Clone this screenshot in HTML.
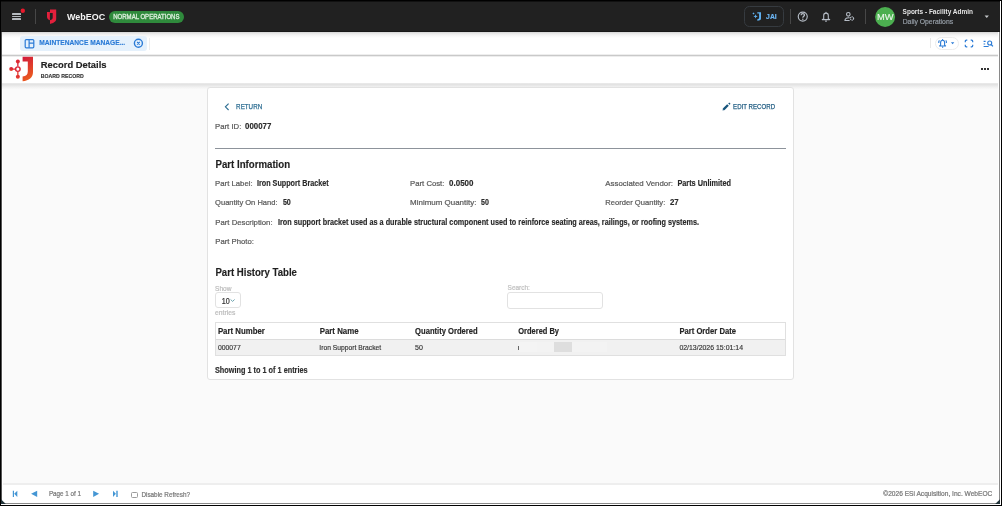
<!DOCTYPE html>
<html><head><meta charset="utf-8"><style>
html,body{margin:0;padding:0;width:1002px;height:506px;overflow:hidden;background:#000}
body{position:relative;font-family:"Liberation Sans",sans-serif}
.t{position:absolute;line-height:1;white-space:nowrap}
.r{position:absolute;display:block}
</style></head><body>
<div class="r" style="left:0px;top:0px;width:1002.00px;height:506.00px;background:#000"></div>
<div class="r" style="left:1px;top:1px;width:1000.00px;height:504.00px;background:#fff"></div>
<div class="r" style="left:1px;top:1px;width:999.00px;height:503.00px;background:#fff;border-left:1px solid #555;border-right:1px solid #8a8a8a;border-bottom:1px solid #8a8a8a;box-sizing:border-box"></div>
<div class="r" style="left:3px;top:56px;width:995.00px;height:427.00px;background:#fafafa"></div>
<div class="r" style="left:1px;top:1px;width:999.00px;height:31.00px;background:#212121;border-top:1px solid #111;border-bottom:1px solid #181818;box-sizing:border-box"></div>
<div class="r" style="left:2px;top:32px;width:996.00px;height:6.00px;background:linear-gradient(#d4d4d4,#ebebeb 30%,#f6f6f6 60%,#fff)"></div>
<div class="r" style="left:12px;top:13.1px;width:9.30px;height:1.70px;background:#b5babf;border-radius:0.6px"></div>
<div class="r" style="left:12px;top:15.6px;width:9.30px;height:1.70px;background:#b5babf;border-radius:0.6px"></div>
<div class="r" style="left:12px;top:18.1px;width:9.30px;height:1.70px;background:#b5babf;border-radius:0.6px"></div>
<svg class="r" style="left:20px;top:8px" width="6" height="6" viewBox="0 0 6 6"><circle cx="2.8" cy="2.7" r="2.2" fill="#e8192c"/></svg>
<div class="r" style="left:35.2px;top:9px;width:1.00px;height:15.00px;background:#474747"></div>
<svg class="r" style="left:42px;top:6px" width="20" height="22" viewBox="0 0 20 22"><g fill="#e3203c"><path d="M8,3.5 H14.2 V13 C14.2,15.6 11.5,17 8,18 V14.3 C9.8,13.8 10.7,12.8 10.7,11.5 V7 H8 Z"/><path d="M5,6 H7.9 V14.3 C6.3,13.8 5,12.6 5,10.8 Z"/></g></svg>
<div class="r" style="left:109px;top:11px;width:74.50px;height:11.50px;background:#2f8a3c;border-radius:6px"></div>
<div class="r" style="left:744px;top:6px;width:40.00px;height:21.00px;border:1px solid #363b40;border-radius:5.5px;box-sizing:border-box"></div>
<svg class="r" style="left:750px;top:10px" width="14" height="13" viewBox="0 0 14 13"><g fill="#5fb0f0"><path d="M7.3,2.2 H11 V8.5 C11,10 10,10.6 7.3,10.7 V9.2 C8.6,9.1 9.1,8.6 9.1,7.8 V3.6 H7.3 Z"/><path d="M5.6,4.2 L6.2,5.8 L7.8,6.4 L6.2,7 L5.6,8.6 L5,7 L3.4,6.4 L5,5.8 Z"/><path d="M3.5,2.3 L3.9,3.1 L4.7,3.5 L3.9,3.9 L3.5,4.7 L3.1,3.9 L2.3,3.5 L3.1,3.1 Z"/></g></svg>
<div class="r" style="left:790px;top:9px;width:1.00px;height:15.00px;background:#474747"></div>
<svg class="r" style="left:796px;top:10px" width="14" height="14" viewBox="0 0 14 14"><circle cx="6.75" cy="6.6" r="4.5" fill="none" stroke="#b6bdc6" stroke-width="1.15"/><path d="M5.1,5.3 C5.1,4.2 5.9,3.7 6.8,3.7 C7.8,3.7 8.5,4.3 8.5,5.1 C8.5,6.3 6.8,6.4 6.8,7.8" fill="none" stroke="#b6bdc6" stroke-width="1.3"/><circle cx="6.8" cy="9.35" r="0.75" fill="#b6bdc6"/></svg>
<svg class="r" style="left:819px;top:10px" width="14" height="14" viewBox="0 0 14 14"><path d="M4.7,8.9 V5.4 C4.7,4 5.7,3.1 7,3.1 C8.3,3.1 9.3,4 9.3,5.4 V8.9 L10.7,9.6 H3.3 Z" fill="none" stroke="#b6bdc6" stroke-width="1.1" stroke-linejoin="round"/><path d="M6.2,11.2 H7.8" stroke="#b6bdc6" stroke-width="1.2"/><circle cx="7" cy="2.3" r="0.6" fill="#b6bdc6"/></svg>
<svg class="r" style="left:842px;top:10px" width="14" height="13" viewBox="0 0 14 13"><circle cx="6.3" cy="4.3" r="1.8" fill="none" stroke="#b6bdc6" stroke-width="1.1"/><path d="M7.6,7.9 C5,7.4 2.9,8.5 2.9,10.5 H7.6" fill="none" stroke="#b6bdc6" stroke-width="1.1" stroke-linejoin="round"/><circle cx="10" cy="8.5" r="1.6" fill="none" stroke="#b6bdc6" stroke-width="1.2" stroke-dasharray="1.1 0.5"/></svg>
<div class="r" style="left:865px;top:9px;width:1.00px;height:15.00px;background:#474747"></div>
<svg class="r" style="left:874px;top:5.6px" width="22" height="22" viewBox="0 0 22 22"><circle cx="11.1" cy="11" r="10" fill="#4caf50"/></svg>
<svg class="r" style="left:983px;top:14px" width="8" height="6" viewBox="0 0 8 6"><path d="M1.6,1.5 H5.9 L3.75,3.9 Z" fill="#c4c7ca"/></svg>
<div class="r" style="left:2px;top:54px;width:996.00px;height:1.00px;background:#eeeeee"></div>
<div class="r" style="left:2px;top:55px;width:996.00px;height:1.00px;background:#c9c9c9"></div>
<div class="r" style="left:2px;top:56px;width:996.00px;height:1.00px;background:#ededed"></div>
<div class="r" style="left:20px;top:36px;width:127.00px;height:15.00px;background:#e5f1fc;border-radius:3px"></div>
<svg class="r" style="left:23px;top:38px" width="13" height="11" viewBox="0 0 13 11"><rect x="2.2" y="1.6" width="8.6" height="8.2" rx="1" fill="none" stroke="#2b7bd6" stroke-width="1.2"/><path d="M6.1,1.6 V9.8 M6.1,5.1 H10.8" stroke="#2b7bd6" stroke-width="1.2"/></svg>
<svg class="r" style="left:132px;top:37px" width="13" height="13" viewBox="0 0 13 13"><circle cx="6.4" cy="6.3" r="4.0" fill="none" stroke="#2b7bd6" stroke-width="1.4"/><path d="M5.1,5 L7.7,7.6 M7.7,5 L5.1,7.6" stroke="#2b7bd6" stroke-width="1.1"/></svg>
<div class="r" style="left:149px;top:38px;width:1.00px;height:12.00px;background:#ededed"></div>
<div class="r" style="left:930px;top:37.7px;width:1.00px;height:10.80px;background:#e8e8e8"></div>
<div class="r" style="left:934.5px;top:36.5px;width:24.50px;height:13.50px;border:1px solid #ececec;border-radius:7px;box-sizing:border-box"></div>
<svg class="r" style="left:936px;top:37px" width="13" height="12" viewBox="0 0 13 12"><g fill="none" stroke="#2b7bd6" stroke-width="1.1" stroke-linejoin="round"><path d="M4.6,8.3 V5.6 C4.6,4.1 5.5,3.2 6.6,3.2 C7.7,3.2 8.6,4.1 8.6,5.6 V8.3 L9.6,9 H3.6 Z"/><path d="M6,10.1 H7.2"/><path d="M3.4,3.3 C2.8,4 2.6,4.8 2.8,6"/><path d="M9.8,3.3 C10.4,4 10.6,4.8 10.4,6"/></g><circle cx="6.6" cy="2.6" r="0.6" fill="#2b7bd6"/></svg>
<svg class="r" style="left:950px;top:41px" width="6" height="4" viewBox="0 0 6 4"><path d="M0.9,1.2 H4.3 L2.6,3.2 Z" fill="#2b7bd6"/></svg>
<svg class="r" style="left:964px;top:39px" width="10" height="9" viewBox="0 0 10 9"><path d="M1.3,3.3 V2.2 Q1.3,1.2 2.3,1.2 H3.3 M6.7,1.2 H7.7 Q8.7,1.2 8.7,2.2 V3.3 M8.7,5.7 V6.8 Q8.7,7.8 7.7,7.8 H6.7 M3.3,7.8 H2.3 Q1.3,7.8 1.3,6.8 V5.7" fill="none" stroke="#2b7bd6" stroke-width="1.2"/></svg>
<svg class="r" style="left:982px;top:39px" width="13" height="10" viewBox="0 0 13 10"><path d="M1.6,2.4 H3.6 M1.6,5 H3.2 M1.6,7.5 H6.6" stroke="#2b7bd6" stroke-width="1.1"/><circle cx="7.7" cy="4" r="2" fill="none" stroke="#2b7bd6" stroke-width="1.1"/><path d="M9.2,5.5 L10.9,7.4" stroke="#2b7bd6" stroke-width="1.3"/></svg>
<div class="r" style="left:2px;top:57px;width:996.00px;height:26.00px;background:#fff"></div>
<div class="r" style="left:2px;top:83px;width:996.00px;height:6.00px;background:linear-gradient(#ebebeb 0%,#e3e3e3 25%,#e9e9e9 45%,#f0f0f0 65%,#f5f5f5 85%,#f9f9f9 100%)"></div>
<svg class="r" style="left:8px;top:55px" width="28" height="28" viewBox="0 0 28 28"><defs><linearGradient id="jg" x1="0" y1="0" x2="0.3" y2="1"><stop offset="0" stop-color="#d2183c"/><stop offset="1" stop-color="#ea5a1f"/></linearGradient><linearGradient id="ng" x1="0" y1="0" x2="0" y2="1"><stop offset="0" stop-color="#d81a3a"/><stop offset="1" stop-color="#e8462a"/></linearGradient></defs><path d="M14.6,1.8 H25 V17 C25,22.5 21,25.6 14.6,26.3 V21.6 C18.2,21 19.8,19.4 19.8,16.5 V6.6 H14.6 Z" fill="url(#jg)"/><g fill="url(#ng)" stroke="url(#ng)"><circle cx="9.85" cy="6.4" r="2" stroke="none"/><circle cx="9.85" cy="21.8" r="2" stroke="none"/><circle cx="3.2" cy="14.1" r="2" stroke="none"/><path d="M9.85,6.4 V11.5 M9.85,16.7 V21.8 M3.2,14.1 H7.3" stroke-width="1.3" fill="none"/></g><circle cx="9.85" cy="14.1" r="2.25" fill="#fff" stroke="#dd2636" stroke-width="1.45"/></svg>
<div class="r" style="left:981.0px;top:67.9px;width:2.20px;height:2.20px;background:#333"></div>
<div class="r" style="left:983.9px;top:67.9px;width:2.20px;height:2.20px;background:#333"></div>
<div class="r" style="left:986.8px;top:67.9px;width:2.20px;height:2.20px;background:#333"></div>
<div class="r" style="left:3px;top:483px;width:995.00px;height:2.00px;background:#eeeeee"></div>
<div class="r" style="left:2px;top:485px;width:996.00px;height:18.00px;background:#fff"></div>
<svg class="r" style="left:10px;top:488px" width="10" height="11" viewBox="0 0 10 11"><path d="M3.4,2.7 V8.9" stroke="#4496d4" stroke-width="1.2"/><path d="M7.3,2.7 V8.9 L4.2,5.8 Z" fill="#4496d4"/></svg>
<svg class="r" style="left:29px;top:488px" width="10" height="11" viewBox="0 0 10 11"><path d="M8.2,2.7 V8.9 L2.1,5.8 Z" fill="#4496d4"/></svg>
<svg class="r" style="left:91px;top:488px" width="10" height="11" viewBox="0 0 10 11"><path d="M2.2,2.7 V8.9 L8.1,5.8 Z" fill="#4496d4"/></svg>
<svg class="r" style="left:111px;top:488px" width="10" height="11" viewBox="0 0 10 11"><path d="M2,2.7 V8.9 L4.9,5.8 Z" fill="#4496d4"/><path d="M6,2.7 V8.9" stroke="#4496d4" stroke-width="1.4"/></svg>
<div class="r" style="left:131px;top:492px;width:7.00px;height:6.00px;border:1px solid #9c9c9c;border-radius:1.5px;box-sizing:border-box;background:#fff"></div>
<svg class="r" style="left:0px;top:495px" width="8" height="11" viewBox="0 0 8 11"><path d="M1,4.2 L1,9 L5.8,9 Z" fill="#22343a"/></svg>
<svg class="r" style="left:994px;top:495px" width="8" height="11" viewBox="0 0 8 11"><path d="M6,4.2 L6,9 L1.2,9 Z" fill="#22343a"/></svg>
<div class="r" style="left:207px;top:87px;width:587.00px;height:293.00px;background:#fff;border:1px solid #e2e2e2;border-radius:3px;box-sizing:border-box"></div>
<svg class="r" style="left:222px;top:101px" width="10" height="11" viewBox="0 0 10 11"><path d="M6.6,2.6 L3.4,5.8 L6.6,9" fill="none" stroke="#2c6d92" stroke-width="1.1"/></svg>
<svg class="r" style="left:721px;top:101px" width="11" height="11" viewBox="0 0 11 11"><path d="M2.6,8.4 L7.0,4.0" stroke="#17557c" stroke-width="2.3"/><path d="M7.9,3.1 L8.9,2.1" stroke="#17557c" stroke-width="1.8"/><path d="M1.6,9.4 L1.9,7.5 L3.5,9.1 Z" fill="#17557c"/></svg>
<div class="r" style="left:215px;top:148px;width:571.00px;height:1.00px;background:#8d939b"></div>
<div class="r" style="left:215px;top:292px;width:26.00px;height:16.00px;border:1px solid #e2e2e2;border-radius:3px;box-sizing:border-box"></div>
<svg class="r" style="left:229px;top:298px" width="7" height="5" viewBox="0 0 7 5"><path d="M1.6,1.5 L3.6,3.4 L5.6,1.5" fill="none" stroke="#5d9aa6" stroke-width="0.9"/></svg>
<div class="r" style="left:507px;top:292px;width:96.00px;height:17.00px;border:1px solid #e2e2e2;border-radius:3px;box-sizing:border-box"></div>
<div class="r" style="left:215px;top:322px;width:571.00px;height:34.00px;border:1px solid #e0e0e0;box-sizing:border-box;background:#fff"></div>
<div class="r" style="left:216px;top:339px;width:569.00px;height:16.00px;background:#f1f1f1;border-top:1px solid #dcdcdc;box-sizing:border-box"></div>
<div class="r" style="left:518px;top:346.1px;width:1.00px;height:3.50px;background:#666"></div>
<div class="r" style="left:518.7px;top:342.2px;width:18.30px;height:9.50px;background:#f4f4f4"></div>
<div class="r" style="left:537px;top:342.2px;width:70.00px;height:9.50px;background:#f3f3f3"></div>
<div class="r" style="left:554px;top:342.2px;width:18.00px;height:9.50px;background:#dedede"></div>
<svg class="r" style="left:0;top:0;will-change:transform" width="1002" height="506" font-family="Liberation Sans"><text x="67.00" y="19.80" font-size="9.96" font-weight="bold" fill="#f4f4f4" textLength="38.20" lengthAdjust="spacingAndGlyphs">WebEOC</text>
<text x="113.25" y="18.60" font-size="6.54" fill="#dcefdc" stroke="#dcefdc" stroke-width="0.3" textLength="66.20" lengthAdjust="spacingAndGlyphs">NORMAL OPERATIONS</text>
<text x="766.08" y="18.90" font-size="6.83" font-weight="bold" fill="#6cb6f4" stroke="#6cb6f4" stroke-width="0.15" textLength="10.65" lengthAdjust="spacingAndGlyphs">JAI</text>
<text x="876.95" y="19.70" font-size="9.16" fill="#eef7ee" stroke="#eef7ee" stroke-width="0.1" textLength="16.60" lengthAdjust="spacingAndGlyphs">MW</text>
<text x="902.60" y="13.70" font-size="7.27" font-weight="bold" fill="#e4e4e4" textLength="70.40" lengthAdjust="spacingAndGlyphs">Sports - Facility Admin</text>
<text x="902.68" y="23.70" font-size="6.98" fill="#9aa2ab" stroke="#9aa2ab" stroke-width="0.15" textLength="50.45" lengthAdjust="spacingAndGlyphs">Daily Operations</text>
<text x="39.28" y="45.40" font-size="7.41" font-weight="bold" fill="#2b7bd6" stroke="#2b7bd6" stroke-width="0.15" textLength="85.95" lengthAdjust="spacingAndGlyphs">MAINTENANCE MANAGE...</text>
<text x="40.78" y="67.57" font-size="9.88" font-weight="bold" fill="#222" stroke="#222" stroke-width="0.15" textLength="65.75" lengthAdjust="spacingAndGlyphs">Record Details</text>
<text x="40.78" y="78.10" font-size="5.60" font-weight="bold" fill="#333" stroke="#333" stroke-width="0.15" textLength="42.95" lengthAdjust="spacingAndGlyphs">BOARD RECORD</text>
<text x="48.91" y="495.80" font-size="6.98" fill="#777" stroke="#777" stroke-width="0.22" textLength="32.18" lengthAdjust="spacingAndGlyphs">Page 1 of 1</text>
<text x="141.41" y="496.50" font-size="7.27" fill="#777" stroke="#777" stroke-width="0.22" textLength="48.68" lengthAdjust="spacingAndGlyphs">Disable Refresh?</text>
<text x="883.31" y="495.80" font-size="7.12" fill="#777" stroke="#777" stroke-width="0.22" textLength="109.08" lengthAdjust="spacingAndGlyphs">&#169;2026 ESi Acquisition, Inc. WebEOC</text>
<text x="236.12" y="108.70" font-size="7.78" fill="#2c6d92" stroke="#2c6d92" stroke-width="0.25" textLength="26.05" lengthAdjust="spacingAndGlyphs">RETURN</text>
<text x="733.12" y="109.00" font-size="7.78" fill="#1d5a80" stroke="#1d5a80" stroke-width="0.25" textLength="41.95" lengthAdjust="spacingAndGlyphs">EDIT RECORD</text>
<text x="215.11" y="129.30" font-size="7.99" fill="#595959" stroke="#595959" stroke-width="0.22" textLength="26.18" lengthAdjust="spacingAndGlyphs">Part ID:</text>
<text x="245.07" y="129.40" font-size="8.29" font-weight="bold" fill="#2a2a2a" stroke="#2a2a2a" stroke-width="0.15" textLength="26.25" lengthAdjust="spacingAndGlyphs">000077</text>
<text x="215.47" y="167.55" font-size="10.54" font-weight="bold" fill="#1f1f1f" stroke="#1f1f1f" stroke-width="0.15" textLength="74.65" lengthAdjust="spacingAndGlyphs">Part Information</text>
<text x="215.11" y="185.60" font-size="7.99" fill="#595959" stroke="#595959" stroke-width="0.22" textLength="37.48" lengthAdjust="spacingAndGlyphs">Part Label:</text>
<text x="256.97" y="185.60" font-size="8.14" font-weight="bold" fill="#2a2a2a" stroke="#2a2a2a" stroke-width="0.15" textLength="71.65" lengthAdjust="spacingAndGlyphs">Iron Support Bracket</text>
<text x="410.11" y="185.60" font-size="7.99" fill="#595959" stroke="#595959" stroke-width="0.22" textLength="34.28" lengthAdjust="spacingAndGlyphs">Part Cost:</text>
<text x="449.07" y="185.60" font-size="8.14" font-weight="bold" fill="#2a2a2a" stroke="#2a2a2a" stroke-width="0.15" textLength="24.35" lengthAdjust="spacingAndGlyphs">0.0500</text>
<text x="605.31" y="185.60" font-size="7.99" fill="#595959" stroke="#595959" stroke-width="0.22" textLength="67.68" lengthAdjust="spacingAndGlyphs">Associated Vendor:</text>
<text x="677.38" y="185.60" font-size="8.14" font-weight="bold" fill="#2a2a2a" stroke="#2a2a2a" stroke-width="0.15" textLength="53.55" lengthAdjust="spacingAndGlyphs">Parts Unlimited</text>
<text x="215.11" y="205.00" font-size="7.99" fill="#595959" stroke="#595959" stroke-width="0.22" textLength="62.38" lengthAdjust="spacingAndGlyphs">Quantity On Hand:</text>
<text x="282.88" y="205.00" font-size="8.14" font-weight="bold" fill="#2a2a2a" stroke="#2a2a2a" stroke-width="0.15" textLength="7.95" lengthAdjust="spacingAndGlyphs">50</text>
<text x="410.11" y="205.00" font-size="7.99" fill="#595959" stroke="#595959" stroke-width="0.22" textLength="66.28" lengthAdjust="spacingAndGlyphs">Minimum Quantity:</text>
<text x="481.07" y="205.00" font-size="8.14" font-weight="bold" fill="#2a2a2a" stroke="#2a2a2a" stroke-width="0.15" textLength="7.85" lengthAdjust="spacingAndGlyphs">50</text>
<text x="605.31" y="205.00" font-size="7.99" fill="#595959" stroke="#595959" stroke-width="0.22" textLength="59.98" lengthAdjust="spacingAndGlyphs">Reorder Quantity:</text>
<text x="669.98" y="205.00" font-size="8.14" font-weight="bold" fill="#2a2a2a" stroke="#2a2a2a" stroke-width="0.15" textLength="8.75" lengthAdjust="spacingAndGlyphs">27</text>
<text x="215.31" y="224.60" font-size="7.99" fill="#595959" stroke="#595959" stroke-width="0.22" textLength="57.28" lengthAdjust="spacingAndGlyphs">Part Description:</text>
<text x="277.97" y="224.60" font-size="8.14" font-weight="bold" fill="#2a2a2a" stroke="#2a2a2a" stroke-width="0.15" textLength="421.05" lengthAdjust="spacingAndGlyphs">Iron support bracket used as a durable structural component used to reinforce seating areas, railings, or roofing systems.</text>
<text x="215.31" y="244.00" font-size="7.99" fill="#595959" stroke="#595959" stroke-width="0.22" textLength="38.58" lengthAdjust="spacingAndGlyphs">Part Photo:</text>
<text x="215.47" y="275.80" font-size="10.47" font-weight="bold" fill="#1f1f1f" stroke="#1f1f1f" stroke-width="0.15" textLength="81.45" lengthAdjust="spacingAndGlyphs">Part History Table</text>
<text x="215.11" y="290.50" font-size="7.12" fill="#bcbcbc" stroke="#bcbcbc" stroke-width="0.22" textLength="16.36" lengthAdjust="spacingAndGlyphs">Show</text>
<text x="221.71" y="303.80" font-size="8.14" fill="#333" stroke="#333" stroke-width="0.22" textLength="7.98" lengthAdjust="spacingAndGlyphs">10</text>
<text x="215.11" y="314.70" font-size="7.12" fill="#bcbcbc" stroke="#bcbcbc" stroke-width="0.22" textLength="20.28" lengthAdjust="spacingAndGlyphs">entries</text>
<text x="507.61" y="290.30" font-size="7.12" fill="#c0c0c0" stroke="#c0c0c0" stroke-width="0.22" textLength="22.28" lengthAdjust="spacingAndGlyphs">Search:</text>
<text x="217.88" y="333.50" font-size="8.14" font-weight="bold" fill="#252525" stroke="#252525" stroke-width="0.15" textLength="47.05" lengthAdjust="spacingAndGlyphs">Part Number</text>
<text x="319.68" y="333.50" font-size="8.14" font-weight="bold" fill="#252525" stroke="#252525" stroke-width="0.15" textLength="38.95" lengthAdjust="spacingAndGlyphs">Part Name</text>
<text x="415.07" y="333.50" font-size="8.14" font-weight="bold" fill="#252525" stroke="#252525" stroke-width="0.15" textLength="62.65" lengthAdjust="spacingAndGlyphs">Quantity Ordered</text>
<text x="518.28" y="333.50" font-size="8.14" font-weight="bold" fill="#252525" stroke="#252525" stroke-width="0.15" textLength="40.75" lengthAdjust="spacingAndGlyphs">Ordered By</text>
<text x="679.38" y="333.50" font-size="8.14" font-weight="bold" fill="#252525" stroke="#252525" stroke-width="0.15" textLength="56.65" lengthAdjust="spacingAndGlyphs">Part Order Date</text>
<text x="217.88" y="349.80" font-size="7.41" fill="#333" stroke="#333" stroke-width="0.15" textLength="22.85" lengthAdjust="spacingAndGlyphs">000077</text>
<text x="319.27" y="349.80" font-size="7.41" fill="#333" stroke="#333" stroke-width="0.15" textLength="61.95" lengthAdjust="spacingAndGlyphs">Iron Support Bracket</text>
<text x="415.07" y="349.80" font-size="7.41" fill="#333" stroke="#333" stroke-width="0.15" textLength="7.85" lengthAdjust="spacingAndGlyphs">50</text>
<text x="679.38" y="349.80" font-size="7.41" fill="#333" stroke="#333" stroke-width="0.15" textLength="63.65" lengthAdjust="spacingAndGlyphs">02/13/2026 15:01:14</text>
<text x="214.97" y="372.60" font-size="8.14" font-weight="bold" fill="#2e2e2e" stroke="#2e2e2e" stroke-width="0.15" textLength="92.65" lengthAdjust="spacingAndGlyphs">Showing 1 to 1 of 1 entries</text></svg>
</body></html>
